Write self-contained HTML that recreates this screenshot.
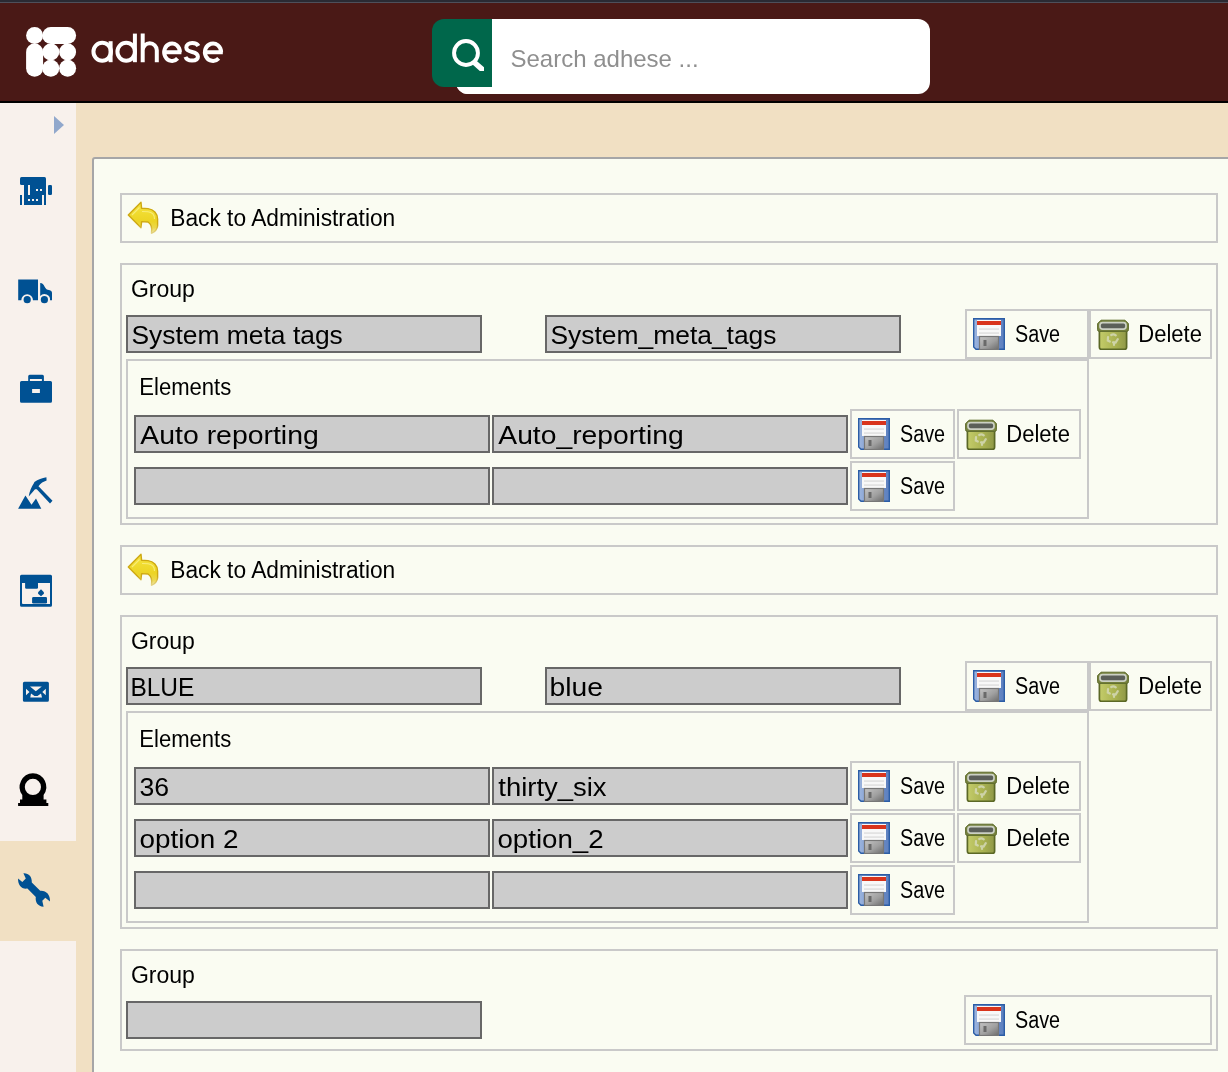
<!DOCTYPE html>
<html><head><meta charset="utf-8">
<title>adhese - Administration</title>
<style>
*{box-sizing:border-box;margin:0;padding:0}
html,body{width:1228px;height:1072px;overflow:hidden;background:#f1e0c3;font-family:"Liberation Sans",sans-serif;color:#000}
.a{position:absolute}
#hdr{left:0;top:0;width:1228px;height:101px;background:#4a1916}
#hdr .t0{left:0;top:0;width:1228px;height:2px;background:#2a2a33}
#hdr .t1{left:0;top:2px;width:1228px;height:1px;background:#4e4f5a}
#hline{left:0;top:101px;width:1228px;height:2px;background:#000}
#side{left:0;top:103px;width:76px;height:969px;background:#f8f1ec}
#act{left:0;top:841px;width:76px;height:100px;background:#f1e0c3}
#panel{left:92px;top:157px;width:1200px;height:1000px;background:#fafcf2;border:2px solid #a6a6a7;border-top-left-radius:3px}
#sgreen{left:432px;top:19px;width:60px;height:68px;background:#00674b;border-radius:12px 0 0 12px}
#swhite{left:456px;top:19px;width:474px;height:75px;background:#fff;border-radius:0 12px 12px 12px}
#swhite2{left:456px;top:19px;width:60px;height:75px;background:#fff;border-radius:12px 0 0 12px}
.box,.btn{position:absolute;border:2px solid #c9c9c9}
.inp{position:absolute;border:2px solid #676767;background:#ccc}
.ic{position:absolute;overflow:visible}
#ov{position:absolute;left:0;top:0;width:1228px;height:1072px;pointer-events:none;will-change:transform}
#ov text{font-family:"Liberation Sans",sans-serif}
</style></head>
<body>
<svg width="0" height="0" style="position:absolute">
 <defs>
  <linearGradient id="flb" x1="0" y1="0" x2="1" y2="0">
   <stop offset="0" stop-color="#9db5de"/><stop offset="0.5" stop-color="#7393cb"/><stop offset="1" stop-color="#5d80bf"/>
  </linearGradient>
  <linearGradient id="flm" x1="0" y1="0" x2="1" y2="1">
   <stop offset="0" stop-color="#c4c4c4"/><stop offset="0.55" stop-color="#a0a0a0"/><stop offset="1" stop-color="#6c6c6c"/>
  </linearGradient>
  <linearGradient id="bing" x1="0" y1="0" x2="1" y2="0">
   <stop offset="0" stop-color="#c4cc6a"/><stop offset="0.6" stop-color="#a8b150"/><stop offset="1" stop-color="#8f9848"/>
  </linearGradient>
  <linearGradient id="arg" gradientUnits="userSpaceOnUse" x1="0" y1="4" x2="0" y2="36">
   <stop offset="0" stop-color="#f6e540"/><stop offset="0.6" stop-color="#ecd424"/><stop offset="0.8" stop-color="#ecd84a"/><stop offset="1" stop-color="#f2eab8"/>
  </linearGradient>
  <linearGradient id="ars" gradientUnits="userSpaceOnUse" x1="0" y1="4" x2="0" y2="36">
   <stop offset="0" stop-color="#cda812"/><stop offset="0.7" stop-color="#cfa912"/><stop offset="1" stop-color="#e6d890"/>
  </linearGradient>
  <symbol id="floppy" viewBox="0 0 32 32">
   <path d="M0.7 0.7 H31.3 V31.3 H3 L0.7 29 Z" fill="url(#flb)" stroke="#2b5da6" stroke-width="1.4"/>
   <rect x="4" y="2" width="24" height="16" fill="#f8f8f8"/>
   <rect x="4" y="3" width="24" height="4" fill="#d9341c"/>
   <rect x="6" y="10.3" width="20" height="1.6" fill="#e0e0e0"/>
   <rect x="6" y="14.3" width="20" height="1.6" fill="#e0e0e0"/>
   <rect x="6.5" y="18.5" width="19" height="13" fill="url(#flm)" stroke="#777" stroke-width="1.2"/>
   <rect x="10.5" y="22" width="3" height="6" fill="#6a6a6a"/>
  </symbol>
  <symbol id="bin" viewBox="0 0 32 32">
   <rect x="2.4" y="12" width="27.2" height="19.4" rx="2.2" fill="url(#bing)" stroke="#5b6826" stroke-width="1.7"/>
   <path d="M4 2.2 H28 L31.4 5.6 V11.8 Q31.4 13.4 29.8 13.4 H2.2 Q0.6 13.4 0.6 11.8 V5.6 Z" fill="#76823f" stroke="#5f6c2c" stroke-width="1"/>
   <rect x="3" y="4.6" width="26" height="6.6" rx="2.6" fill="#5b5f59" stroke="#cbd0c3" stroke-width="1.7"/>
   <g fill="none" stroke="#d7dbbd" stroke-width="2.2" opacity="0.8" stroke-linecap="round">
    <path d="M14.2 17 Q16.5 15.6 18.8 17.4"/>
    <path d="M11 19.2 L10.8 22.6 L12.8 23.6"/>
    <path d="M20.8 21.2 L18.6 24.6 L16 24.4"/>
    <path d="M17 24.6 V27"/>
   </g>
  </symbol>
  <symbol id="arrow" viewBox="0 0 42 40">
   <path d="M6.3 17 L19 4.3 L19.6 10.2 L26 10.6 C31.5 11.2 35.6 15.5 35.6 21 L35.6 28 C35.2 31.5 32.5 34 29.5 35.3 C30.2 31 30.2 26.5 26 24 L19.6 23.6 L19 29.8 Z" fill="url(#arg)" stroke="url(#ars)" stroke-width="1.4" stroke-linejoin="round"/>
   <path d="M10 17 L17.5 9.5 M20 13.5 L26 13.8 C30 14.3 32.5 17 32.5 21" fill="none" stroke="#faf08a" stroke-width="1.1" opacity="0.8"/>
  </symbol>
 </defs>
</svg>

<div id="hdr" class="a">
  <div class="a t0"></div><div class="a t1"></div>
</div>
<div id="hline" class="a"></div>
<div id="swhite" class="a"></div>
<div id="swhite2" class="a"></div>
<div id="sgreen" class="a"></div>
<div id="side" class="a"></div>
<div id="act" class="a"></div>
<div id="panel" class="a"></div>
<div class="box" style="left:120px;top:193px;width:1098px;height:50px"></div>
<div class="box" style="left:120px;top:263px;width:1098px;height:262px"></div>
<div class="inp" style="left:126px;top:315px;width:356px;height:38px"></div>
<div class="inp" style="left:545px;top:315px;width:356px;height:38px"></div>
<div class="btn" style="left:965px;top:309px;width:124px;height:50px"></div>
<div class="btn" style="left:1089px;top:309px;width:123px;height:50px"></div>
<div class="box" style="left:126px;top:359px;width:963px;height:160px"></div>
<div class="inp" style="left:134px;top:415px;width:356px;height:38px"></div>
<div class="inp" style="left:492px;top:415px;width:356px;height:38px"></div>
<div class="btn" style="left:850px;top:409px;width:105px;height:50px"></div>
<div class="btn" style="left:957px;top:409px;width:124px;height:50px"></div>
<div class="inp" style="left:134px;top:467px;width:356px;height:38px"></div>
<div class="inp" style="left:492px;top:467px;width:356px;height:38px"></div>
<div class="btn" style="left:850px;top:461px;width:105px;height:50px"></div>
<div class="box" style="left:120px;top:545px;width:1098px;height:50px"></div>
<div class="box" style="left:120px;top:615px;width:1098px;height:314px"></div>
<div class="inp" style="left:126px;top:667px;width:356px;height:38px"></div>
<div class="inp" style="left:545px;top:667px;width:356px;height:38px"></div>
<div class="btn" style="left:965px;top:661px;width:124px;height:50px"></div>
<div class="btn" style="left:1089px;top:661px;width:123px;height:50px"></div>
<div class="box" style="left:126px;top:711px;width:963px;height:212px"></div>
<div class="inp" style="left:134px;top:767px;width:356px;height:38px"></div>
<div class="inp" style="left:492px;top:767px;width:356px;height:38px"></div>
<div class="btn" style="left:850px;top:761px;width:105px;height:50px"></div>
<div class="btn" style="left:957px;top:761px;width:124px;height:50px"></div>
<div class="inp" style="left:134px;top:819px;width:356px;height:38px"></div>
<div class="inp" style="left:492px;top:819px;width:356px;height:38px"></div>
<div class="btn" style="left:850px;top:813px;width:105px;height:50px"></div>
<div class="btn" style="left:957px;top:813px;width:124px;height:50px"></div>
<div class="inp" style="left:134px;top:871px;width:356px;height:38px"></div>
<div class="inp" style="left:492px;top:871px;width:356px;height:38px"></div>
<div class="btn" style="left:850px;top:865px;width:105px;height:50px"></div>
<div class="box" style="left:120px;top:949px;width:1098px;height:102px"></div>
<div class="inp" style="left:126px;top:1001px;width:356px;height:38px"></div>
<div class="btn" style="left:964px;top:995px;width:248px;height:50px"></div>
<svg class="ic" style="left:122px;top:198px" width="42" height="40" viewBox="0 0 42 40"><use href="#arrow"/></svg>
<svg class="ic" style="left:973px;top:318px" width="32" height="32" viewBox="0 0 32 32"><use href="#floppy"/></svg>
<svg class="ic" style="left:1097px;top:318px" width="32" height="32" viewBox="0 0 32 32"><use href="#bin"/></svg>
<svg class="ic" style="left:858px;top:418px" width="32" height="32" viewBox="0 0 32 32"><use href="#floppy"/></svg>
<svg class="ic" style="left:965px;top:418px" width="32" height="32" viewBox="0 0 32 32"><use href="#bin"/></svg>
<svg class="ic" style="left:858px;top:470px" width="32" height="32" viewBox="0 0 32 32"><use href="#floppy"/></svg>
<svg class="ic" style="left:122px;top:550px" width="42" height="40" viewBox="0 0 42 40"><use href="#arrow"/></svg>
<svg class="ic" style="left:973px;top:670px" width="32" height="32" viewBox="0 0 32 32"><use href="#floppy"/></svg>
<svg class="ic" style="left:1097px;top:670px" width="32" height="32" viewBox="0 0 32 32"><use href="#bin"/></svg>
<svg class="ic" style="left:858px;top:770px" width="32" height="32" viewBox="0 0 32 32"><use href="#floppy"/></svg>
<svg class="ic" style="left:965px;top:770px" width="32" height="32" viewBox="0 0 32 32"><use href="#bin"/></svg>
<svg class="ic" style="left:858px;top:822px" width="32" height="32" viewBox="0 0 32 32"><use href="#floppy"/></svg>
<svg class="ic" style="left:965px;top:822px" width="32" height="32" viewBox="0 0 32 32"><use href="#bin"/></svg>
<svg class="ic" style="left:858px;top:874px" width="32" height="32" viewBox="0 0 32 32"><use href="#floppy"/></svg>
<svg class="ic" style="left:973px;top:1004px" width="32" height="32" viewBox="0 0 32 32"><use href="#floppy"/></svg>
<svg id="ov" viewBox="0 0 1228 1072">
 <!-- logo -->
 <g fill="#fff">
  <circle cx="34.6" cy="35.5" r="8.5"/>
  <rect x="42.3" y="27" width="33.8" height="17" rx="8.5"/>
  <rect x="26.1" y="43.4" width="17" height="33.3" rx="8.5"/>
  <circle cx="50.8" cy="51.9" r="8.5"/><circle cx="67.6" cy="51.9" r="8.5"/>
  <circle cx="50.8" cy="68.2" r="8.5"/><circle cx="67.6" cy="68.2" r="8.5"/>
 </g>
 <g fill="none" stroke="#fff" stroke-width="4">
  <ellipse cx="102.2" cy="51.7" rx="8.75" ry="9.0"/>
  <path d="M110.6 41.2 V62.2"/>
  <ellipse cx="126.2" cy="51.7" rx="8.75" ry="9.0"/>
  <path d="M134.9 33.6 V62.2"/>
  <path d="M142.7 33.6 V62.2 M142.7 50.3 A7.05 7.05 0 0 1 156.8 50.3 V62.2"/>
  <path d="M163.8 52.2 H181.4 M179.9 52.2 A7.85 8.75 0 1 0 177.6 58.4" />
  <path d="M198.4 46 C197.3 43.8 195 43 192.2 43 C188.6 43 186.3 44.8 186.3 47.5 C186.3 50.4 189.3 51.3 192.2 52 C195.5 52.8 197.9 53.9 197.9 56.8 C197.9 59.2 195.5 60.6 192 60.6 C188.9 60.6 186.4 59.4 185.5 56.8"/>
  <path d="M204.6 52.2 H222.8 M221.1 52.2 A8.1 8.75 0 1 0 218.7 58.4" />
 </g>
 <!-- search -->
 <defs><filter id="sblur" x="-20%" y="-20%" width="140%" height="140%"><feGaussianBlur stdDeviation="0.45"/></filter></defs>
 <g filter="url(#sblur)">
 <circle cx="466" cy="53" r="11.95" fill="none" stroke="#fff" stroke-width="3.9"/>
 <path d="M476.2 60.6 L484 67.2 L484 71 L479.8 71 L472.6 64.4 Z" fill="#fff"/>
 </g>
 <text x="510.5" y="67" font-size="24" fill="#8f8f8f">Search adhese ...</text>
 <!-- sidebar -->
 <path d="M54 116 L64 125 L54 134 Z" fill="#91a8cc"/>
 <g fill="#005193">
  <!-- icon1 -->
  <rect x="20" y="177" width="26" height="8" rx="1.5"/>
  <rect x="20" y="195" width="2" height="10"/>
  <path d="M24 184 H28 V195 H30 V184 H46 V205 H44 V195 H42 V205 H24 Z"/>
  <g fill="#f8f1ec"><rect x="36" y="189" width="2" height="2"/><rect x="40" y="189" width="2" height="2"/><rect x="28" y="199" width="2" height="2"/><rect x="32" y="199" width="2" height="2"/><rect x="36" y="199" width="2" height="2"/></g>
  <rect x="48" y="185" width="4" height="10" rx="1.2"/>
  <!-- truck -->
  <path d="M18.2 279.5 H38 V300.2 H33 A5.6 5.6 0 0 0 21.3 300.2 H18.2 Z"/>
  <path d="M40.2 283 C42.5 283 43.5 284.5 44.5 286.5 C45.8 289 47 290 49 290 C51 290.3 52 291.5 52 293 V300.3 H50 A5.6 5.6 0 0 0 40.2 296 Z"/>
  <circle cx="27.2" cy="299.7" r="3.6"/><circle cx="44.4" cy="299.7" r="3.6"/>
  <!-- briefcase -->
  <path d="M20 382.5 A1.5 1.5 0 0 1 21.5 381 H28.2 V376.3 A1.5 1.5 0 0 1 29.7 374.8 H42.4 A1.5 1.5 0 0 1 43.9 376.3 V381 H50.5 A1.5 1.5 0 0 1 52 382.5 V401.3 A1.5 1.5 0 0 1 50.5 402.8 H21.5 A1.5 1.5 0 0 1 20 401.3 Z M29.9 379 V381 H41.9 V379 Z M32.1 389.1 V393 H39.9 V389.1 Z" fill-rule="evenodd"/>
  <!-- pickaxe/mountains -->
  <path d="M18.1 508.7 L25.4 495.5 L31.5 504.8 L36 498.6 L41.3 508.7 Z"/>
  <path d="M28.7 496.4 C29.5 491.5 31.5 486.5 34 483 L34.4 482 C38 479.5 42 477.8 46.4 477.2 L46.6 480.5 C43.5 481.5 40.5 483.2 38.5 486.2 L52.5 500.8 L50 503.6 L37 489.5 C35.5 489 34.5 489.8 34 490.5 Z"/>
  <!-- window -->
  <path d="M20 576.3 A1.5 1.5 0 0 1 21.5 574.8 H50.5 A1.5 1.5 0 0 1 52 576.3 V605.2 A1.5 1.5 0 0 1 50.5 606.7 H21.5 A1.5 1.5 0 0 1 20 605.2 Z M22 583 V603 A1 1 0 0 0 23 604 H50 V583 Z" fill-rule="evenodd"/>
  <rect x="25.1" y="582" width="12.9" height="6.8" rx="1.3"/>
  <rect x="32.1" y="597" width="14.9" height="6.5" rx="1.3"/>
  <path d="M41 589.3 L43.9 592.3 V593.7 L41 596.3 L38.1 593.7 V592.3 Z"/>
  <!-- envelope -->
  <path d="M22.9 683.3 A1.5 1.5 0 0 1 24.4 681.8 H47.4 A1.5 1.5 0 0 1 48.9 683.3 V700.2 A1.5 1.5 0 0 1 47.4 701.7 H24.4 A1.5 1.5 0 0 1 22.9 700.2 Z M30 686.5 L35.8 691.3 L41.8 686.5 Z M26 688.8 V695.3 L29.5 692 Z M45.8 688.8 V695.3 L42.3 692 Z M31 693.5 L30.3 697.6 H42 L41 693.5 L37.5 696 H34.5 Z" fill-rule="evenodd"/>
  <!-- wrench -->
  <path d="M23.4 873.2 C28.5 872.8 32.2 876.5 31.8 882.4 L40.2 890.8 C46 890.3 50.3 894.5 50 901.4 L45.3 897.8 L42.3 900.8 L43.6 906.7 C37.8 906.5 35 902 35.8 897 L27.4 888.6 C21.5 889.5 17.7 885 18.1 878.5 L22.3 882 L25.8 878.5 Z"/>
 </g>
 <!-- black ring icon -->
 <path d="M32.9 773.2 A13.7 13.7 0 0 1 43.6 795 V799.5 H46.4 V803 H48.3 V806 H18.1 V803 H20 V799.5 H22.3 V795 A13.7 13.7 0 0 1 32.9 773.2 Z M32.9 778.8 A8.1 8.1 0 1 0 32.9 795 A8.1 8.1 0 1 0 32.9 778.8 Z" fill="#000" fill-rule="evenodd"/>
<text x="170.23" y="226" font-size="23.0" fill="#000" textLength="225.04" lengthAdjust="spacingAndGlyphs">Back to Administration</text>
<text x="130.92" y="297" font-size="23.0" fill="#000" textLength="64.01" lengthAdjust="spacingAndGlyphs">Group</text>
<text x="131.47" y="343.5" font-size="25.5" fill="#000" textLength="211.35" lengthAdjust="spacingAndGlyphs">System meta tags</text>
<text x="550.47" y="343.5" font-size="25.5" fill="#000" textLength="226.05" lengthAdjust="spacingAndGlyphs">System_meta_tags</text>
<text x="1014.98" y="342" font-size="23.0" fill="#000" textLength="45.12" lengthAdjust="spacingAndGlyphs">Save</text>
<text x="1138.28" y="342" font-size="23.0" fill="#000" textLength="63.61" lengthAdjust="spacingAndGlyphs">Delete</text>
<text x="139.28" y="395" font-size="23.0" fill="#000" textLength="92.01" lengthAdjust="spacingAndGlyphs">Elements</text>
<text x="140.30" y="443.5" font-size="25.5" fill="#000" textLength="178.50" lengthAdjust="spacingAndGlyphs">Auto reporting</text>
<text x="498.30" y="443.5" font-size="25.5" fill="#000" textLength="185.39" lengthAdjust="spacingAndGlyphs">Auto_reporting</text>
<text x="899.98" y="442" font-size="23.0" fill="#000" textLength="45.12" lengthAdjust="spacingAndGlyphs">Save</text>
<text x="1006.28" y="442" font-size="23.0" fill="#000" textLength="63.61" lengthAdjust="spacingAndGlyphs">Delete</text>
<text x="899.98" y="494" font-size="23.0" fill="#000" textLength="45.12" lengthAdjust="spacingAndGlyphs">Save</text>
<text x="170.23" y="578" font-size="23.0" fill="#000" textLength="225.04" lengthAdjust="spacingAndGlyphs">Back to Administration</text>
<text x="130.92" y="649" font-size="23.0" fill="#000" textLength="64.01" lengthAdjust="spacingAndGlyphs">Group</text>
<text x="130.38" y="695.5" font-size="25.5" fill="#000" textLength="64.04" lengthAdjust="spacingAndGlyphs">BLUE</text>
<text x="549.53" y="695.5" font-size="25.5" fill="#000" textLength="53.41" lengthAdjust="spacingAndGlyphs">blue</text>
<text x="1014.98" y="694" font-size="23.0" fill="#000" textLength="45.12" lengthAdjust="spacingAndGlyphs">Save</text>
<text x="1138.28" y="694" font-size="23.0" fill="#000" textLength="63.61" lengthAdjust="spacingAndGlyphs">Delete</text>
<text x="139.28" y="747" font-size="23.0" fill="#000" textLength="92.01" lengthAdjust="spacingAndGlyphs">Elements</text>
<text x="139.47" y="795.5" font-size="25.5" fill="#000" textLength="29.61" lengthAdjust="spacingAndGlyphs">36</text>
<text x="498.30" y="795.5" font-size="25.5" fill="#000" textLength="108.30" lengthAdjust="spacingAndGlyphs">thirty_six</text>
<text x="899.98" y="794" font-size="23.0" fill="#000" textLength="45.12" lengthAdjust="spacingAndGlyphs">Save</text>
<text x="1006.28" y="794" font-size="23.0" fill="#000" textLength="63.61" lengthAdjust="spacingAndGlyphs">Delete</text>
<text x="139.43" y="847.5" font-size="25.5" fill="#000" textLength="99.20" lengthAdjust="spacingAndGlyphs">option 2</text>
<text x="497.44" y="847.5" font-size="25.5" fill="#000" textLength="106.19" lengthAdjust="spacingAndGlyphs">option_2</text>
<text x="899.98" y="846" font-size="23.0" fill="#000" textLength="45.12" lengthAdjust="spacingAndGlyphs">Save</text>
<text x="1006.28" y="846" font-size="23.0" fill="#000" textLength="63.61" lengthAdjust="spacingAndGlyphs">Delete</text>
<text x="899.98" y="898" font-size="23.0" fill="#000" textLength="45.12" lengthAdjust="spacingAndGlyphs">Save</text>
<text x="130.92" y="983" font-size="23.0" fill="#000" textLength="64.01" lengthAdjust="spacingAndGlyphs">Group</text>
<text x="1014.98" y="1028" font-size="23.0" fill="#000" textLength="45.12" lengthAdjust="spacingAndGlyphs">Save</text>
</svg>
</body></html>
